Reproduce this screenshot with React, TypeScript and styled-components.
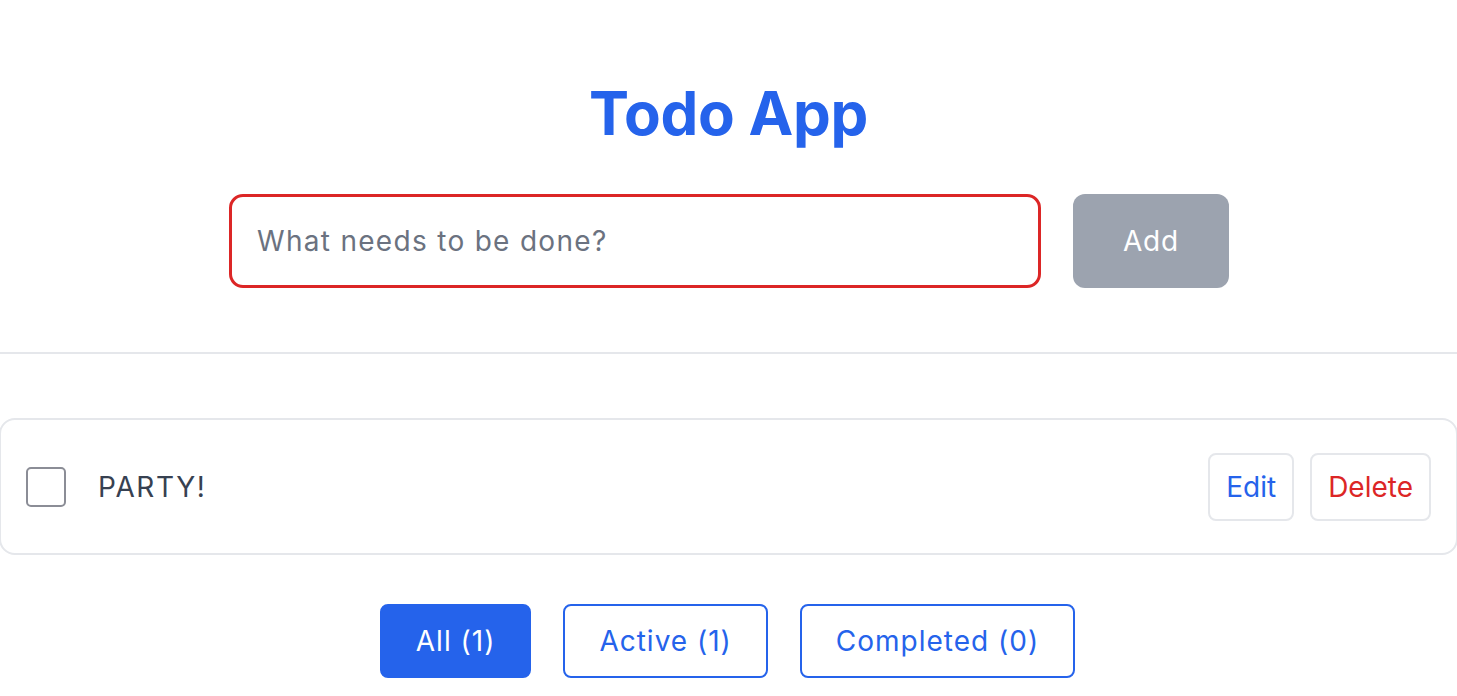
import React, { useState } from "react";
import styled, { createGlobalStyle, css } from "styled-components";

const GlobalStyle = createGlobalStyle`
  html, body { margin: 0; padding: 0; background: #ffffff; }
  body { font-family: Inter, "Noto Sans", "Liberation Sans", sans-serif; -webkit-font-smoothing: antialiased; }
  * { box-sizing: border-box; }
`;

const Page = styled.main`
  display: flex;
  flex-direction: column;
  align-items: center;
  padding-top: 77px;
  width: 100%;
`;

const Title = styled.h1`
  margin: 0 0 45px;
  font-size: 60px;
  line-height: 72px;
  font-weight: 700;
  color: #2563eb;
  text-align: center;
  letter-spacing: -0.3px;
`;

const Form = styled.form`
  display: flex;
  gap: 32px;
  width: 1000px;
  margin-left: 1px;
`;

const Input = styled.input`
  flex: 1;
  height: 94px;
  border: 3px solid #dc2626;
  border-radius: 14px;
  padding: 0 25px;
  font-family: inherit;
  font-size: 28px;
  letter-spacing: 1.3px;
  color: #111827;
  outline: none;
  &::placeholder { color: #6b7280; }
`;

const AddButton = styled.button`
  width: 156px;
  height: 94px;
  border: none;
  border-radius: 12px;
  background: #9ca3af;
  color: #ffffff;
  font-family: inherit;
  font-size: 28px;
  letter-spacing: 0.8px;
`;

const Divider = styled.hr`
  align-self: stretch;
  margin: 64px 0 0;
  border: none;
  border-top: 2px solid #e5e7eb;
`;

const List = styled.ul`
  align-self: stretch;
  list-style: none;
  margin: 64px -1px 0 -1px;
  padding: 0;
`;

const Item = styled.li`
  display: flex;
  align-items: center;
  gap: 32px;
  height: 137px;
  padding: 0 25px 0 25px;
  border: 2px solid #e5e7eb;
  border-radius: 16px;
`;

const Check = styled.input.attrs({ type: "checkbox" })`
  appearance: none;
  margin: 0;
  width: 40px;
  height: 40px;
  border: 2px solid #8b8d96;
  border-radius: 5px;
  background: #fff;
`;

const ItemText = styled.span`
  flex: 1;
  font-size: 28px;
  color: #374151;
  letter-spacing: 1.6px;
`;

const Actions = styled.div`
  display: flex;
  gap: 16px;
`;

const ActionButton = styled.button<{ $tone: "blue" | "red" }>`
  height: 68px;
  padding: 0 16px;
  border: 2px solid #e5e7eb;
  border-radius: 8px;
  background: #ffffff;
  font-family: inherit;
  font-size: 28px;
  color: ${(p) => (p.$tone === "blue" ? "#2563eb" : "#dc2626")};
`;

const Filters = styled.div`
  display: flex;
  gap: 32px;
  margin-top: 49px;
  margin-left: -2px;
`;

const FilterButton = styled.button<{ $active?: boolean }>`
  height: 74px;
  padding: 0 34px;
  border: 2px solid #2563eb;
  border-radius: 8px;
  font-family: inherit;
  font-size: 28px;
  letter-spacing: 1px;
  ${(p) =>
    p.$active
      ? css`
          background: #2563eb;
          color: #ffffff;
        `
      : css`
          background: #ffffff;
          color: #2563eb;
        `}
`;

export default function App() {
  const [text, setText] = useState("");
  return (
    <>
      <GlobalStyle />
      <Page>
        <Title>Todo App</Title>
        <Form onSubmit={(e) => e.preventDefault()}>
          <Input
            placeholder="What needs to be done?"
            value={text}
            onChange={(e) => setText(e.target.value)}
          />
          <AddButton type="submit">Add</AddButton>
        </Form>
        <Divider />
        <List>
          <Item>
            <Check />
            <ItemText>PARTY!</ItemText>
            <Actions>
              <ActionButton $tone="blue">Edit</ActionButton>
              <ActionButton $tone="red">Delete</ActionButton>
            </Actions>
          </Item>
        </List>
        <Filters>
          <FilterButton $active>All (1)</FilterButton>
          <FilterButton>Active (1)</FilterButton>
          <FilterButton>Completed (0)</FilterButton>
        </Filters>
      </Page>
    </>
  );
}
